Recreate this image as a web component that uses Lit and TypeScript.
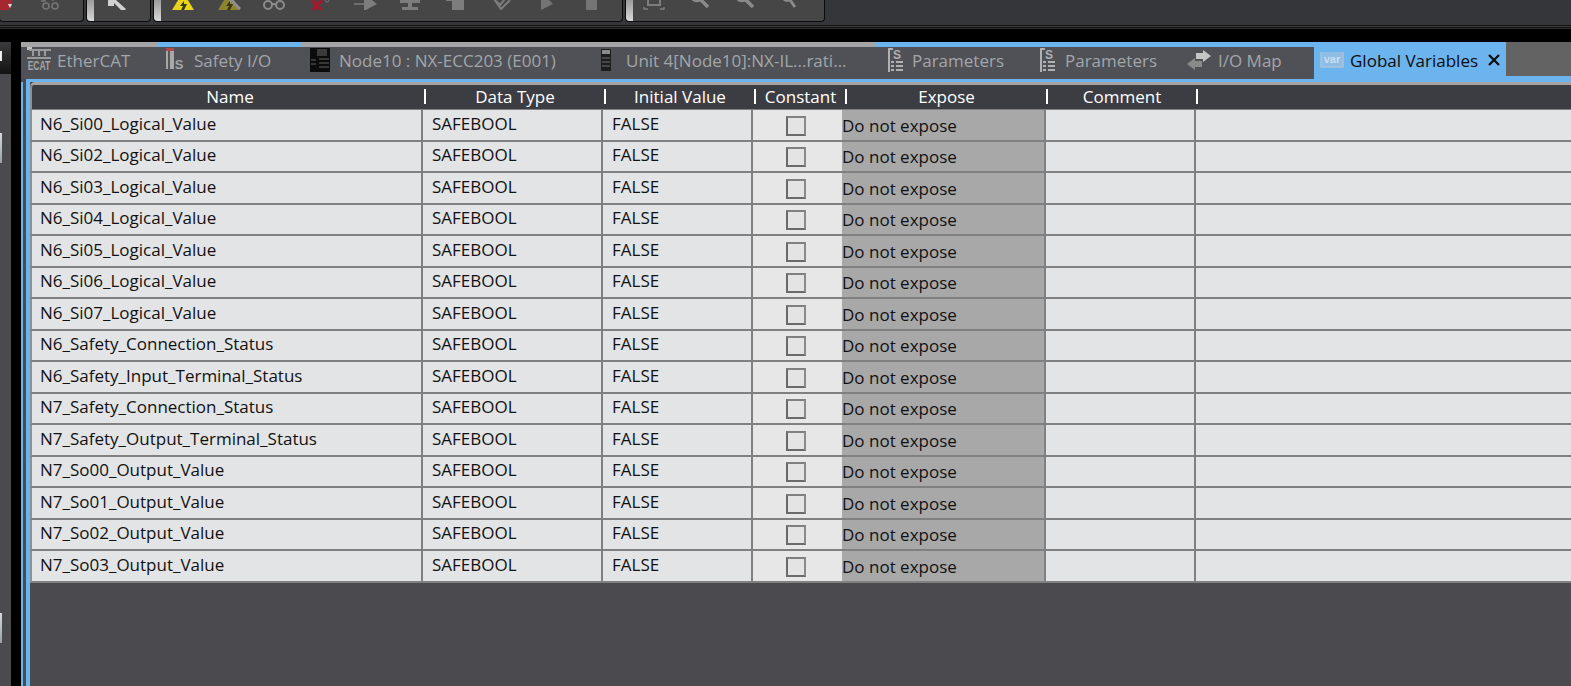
import { LitElement, html, css, svg } from 'lit'
import { customElement } from 'lit/decorators.js'

const names = [
  'N6_Si00_Logical_Value',
  'N6_Si02_Logical_Value',
  'N6_Si03_Logical_Value',
  'N6_Si04_Logical_Value',
  'N6_Si05_Logical_Value',
  'N6_Si06_Logical_Value',
  'N6_Si07_Logical_Value',
  'N6_Safety_Connection_Status',
  'N6_Safety_Input_Terminal_Status',
  'N7_Safety_Connection_Status',
  'N7_Safety_Output_Terminal_Status',
  'N7_So00_Output_Value',
  'N7_So01_Output_Value',
  'N7_So02_Output_Value',
  'N7_So03_Output_Value',
]

const headers = ['Name', 'Data Type', 'Initial Value', 'Constant', 'Expose', 'Comment']

// toolbar icons: only the lower part of each shows, the window cuts off the rest
const gray = '#7d7d7d'
const warn = (fill: string) => svg`<path d="M12 6 L23 24 H1 Z" fill=${fill} /><path d="M13 15 L9 20 H12 L10 24 H13 L16 18 H13 Z" fill="#3a3a10" />`
const glasses = svg`<circle cx="6" cy="19" r="4" fill="none" stroke="#8a8a8a" stroke-width="2"/><circle cx="18" cy="19" r="4" fill="none" stroke="#8a8a8a" stroke-width="2"/><path d="M10 18 H14" stroke="#8a8a8a" stroke-width="2"/>`
const icons = {
  warn: warn('#e8d41a'),
  warnDim: svg`${warn('#8c8430')}<path d="M10 10 L23 23" stroke="#8f8f8f" stroke-width="3"/>`,
  glasses,
  cross: svg`<path d="M4 14 L14 25 M14 14 L4 25" stroke="#a01a30" stroke-width="3.5"/><circle cx="19" cy="14" r="2" fill="none" stroke="#777" stroke-width="1"/>`,
  arrow: svg`<path d="M11 8 L24 18 L11 25 Z" fill=${gray}/><path d="M1 18 H11" stroke=${gray} stroke-width="1.5"/>`,
  tree: svg`<path d="M7 10 H17 V14 H22 V17 H14 V21 H20 V24 H4 V21 H10 V17 H2 V14 H7 Z" fill=${gray}/>`,
  block: svg`<path d="M2 12 H9 V15 H2 Z M8 8 H20 V24 H8 Z" fill=${gray}/>`,
  check: svg`<path d="M3 10 L12 23 L21 14" fill="none" stroke=${gray} stroke-width="2"/><path d="M7 15 L11 19 L20 8" fill="none" stroke=${gray} stroke-width="2"/>`,
  play: svg`<path d="M6 6 L18 18 L6 24 Z" fill="#747474"/>`,
  stop: svg`<path d="M6 6 H17 V24 H6 Z" fill="#747474"/>`,
  frame: svg`<path d="M6 8 H18 V19 H6 Z" fill="none" stroke=${gray} stroke-width="2"/><path d="M2 21 V23 H6 M22 21 V23 H18" fill="none" stroke=${gray} stroke-width="1.5"/>`,
  lens: svg`<circle cx="10" cy="9" r="6" fill="none" stroke="#8a8a8a" stroke-width="2.5"/><path d="M14 14 L21 21" stroke="#8a8a8a" stroke-width="3.5"/>`,
  lensSmall: svg`<circle cx="10" cy="11" r="4" fill="none" stroke="#8a8a8a" stroke-width="2"/><path d="M13 14 L18 21" stroke="#8a8a8a" stroke-width="3"/>`,
}

const ico = (body: unknown) => html`<svg class="tool" viewBox="0 0 24 24">${body}</svg>`

// tab icons
const tabIcons = {
  ecat: svg`<svg class="ti" width="24" height="28" viewBox="0 0 24 28"><rect x="0" y="0" width="5" height="4" fill="#c0c0c0"/><path d="M2 4 H24 M6 4 V10 M12 4 V10 M18 4 V10 M0 12 H24" stroke="#9a9a9a" stroke-width="2" fill="none"/><text transform="translate(12 24) scale(.66 1)" text-anchor="middle" font-family="Liberation Sans" font-size="13" font-weight="700" fill="#a5a5a5">ECAT</text></svg>`,
  safety: svg`<svg class="ti" width="20" height="27" viewBox="0 0 20 27"><rect x="1" y="1" width="8" height="21" fill="#a8a8a8"/><rect x="1" y="1" width="8" height="3" fill="#b04a4a"/><rect x="3" y="4" width="2" height="18" fill="#55565a"/><text x="14" y="22" text-anchor="middle" font-family="Liberation Sans" font-size="13" font-weight="700" fill="#a5a5a5">S</text></svg>`,
  node: svg`<svg class="ti" width="20" height="24" viewBox="0 0 20 24"><rect x="0" y="0" width="20" height="24" fill="#0c0c0c"/><rect x="7" y="1" width="10" height="7" fill="#3a3a3a"/><path d="M9 11 H19 M9 15 H19 M9 19 H19 M1 12 H6 M1 16 H6" stroke="#444" stroke-width="1.5"/></svg>`,
  unit: svg`<svg class="ti" width="10" height="22" viewBox="0 0 10 22"><rect width="10" height="22" fill="#1d1d1d"/><rect x="1" y="1" width="8" height="4" fill="#8a8a8a"/><path d="M1 9 H9 M1 13 H9 M1 17 H9" stroke="#555" stroke-width="1.5"/></svg>`,
  params: svg`<svg class="ti" width="16" height="26" viewBox="0 0 16 26"><path d="M1 1 H6 V3 H3 V25 H1 Z" fill="#b0b0b0"/><text x="10" y="12" text-anchor="middle" font-family="Liberation Sans" font-size="12" font-weight="700" fill="#b0b0b0">S</text><path d="M4 15 H7 M9 15 H16 M4 19 H7 M9 19 H16 M4 23 H7 M9 23 H16" stroke="#b0b0b0" stroke-width="2"/></svg>`,
  map: svg`<svg class="ti" width="24" height="20" viewBox="0 0 24 20"><path d="M9 3 H16 V0 L24 6 L16 12 V9 H9 Z" fill="#c5c5c5"/><path d="M15 11 H8 V8 L0 14 L8 20 V17 H15 Z" fill="#8a8a8a"/></svg>`,
  varbox: svg`<svg class="ti" width="24" height="18" viewBox="0 0 24 18"><path d="M1 1 V16 H23 V1" fill="#8fbde6" stroke="#a9c3dc" stroke-width="1.5"/><text x="12" y="12" text-anchor="middle" font-family="Liberation Sans" font-size="11" font-weight="700" fill="#cfdeec">var</text></svg>`,
}

const tabs = [
  { label: 'EtherCAT', icon: tabIcons.ecat, width: 137, pad: 6, gap: 6, lit: false },
  { label: 'Safety I/O', icon: tabIcons.safety, width: 144, pad: 7, gap: 9, lit: true },
  { label: 'Node10 : NX-ECC203 (E001)', icon: tabIcons.node, width: 288, pad: 8, gap: 9, lit: false },
  { label: 'Unit 4[Node10]:NX-IL...rati...', icon: tabIcons.unit, width: 286, pad: 11, gap: 15, lit: false },
  { label: 'Parameters', icon: tabIcons.params, width: 154, pad: 11, gap: 9, lit: true },
  { label: 'Parameters', icon: tabIcons.params, width: 148, pad: 9, gap: 10, lit: true },
  { label: 'I/O Map', icon: tabIcons.map, width: 136, pad: 9, gap: 7, lit: true },
]

@customElement('app-root')
class App extends LitElement {
  static styles = css`
    :host {
      display: block;
      width: 1571px;
      height: 686px;
      overflow: hidden;
      background: #000;
      font-family: 'Open Sans', 'Noto Sans', sans-serif;
      font-size: 17px;
    }
    .toolbar {
      display: flex;
      height: 25px;
      gap: 2px;
      background: #35363a;
      border-bottom: 1px solid #121212;
    }
    .group {
      display: flex;
      align-items: flex-end;
      height: 21px;
      box-sizing: content-box;
      padding-bottom: 11px;
      margin-top: -11px;
      background: #464646;
      border: 1px solid #0c0c0c;
      border-top: 0;
      border-radius: 0 0 4px 4px;
      overflow: hidden;
    }
    .grip {
      align-self: stretch;
      width: 7px;
      margin-bottom: -11px;
      background: linear-gradient(#7c7c7c, #d8d8d8);
      border-radius: 0 0 0 3px;
      flex: none;
    }
    .tool {
      flex: none;
      width: 24px;
      height: 24px;
    }
    .g1 { width: 83px; margin-left: -1px; gap: 14px; }
    .g2 { width: 63px; gap: 11px; }
    .g3 { width: 468px; gap: 21.4px; }
    .g4 { width: 198px; gap: 21px; }
    .g3 .grip { margin-right: -11px; }
    .g4 .grip { margin-right: -12px; }
    .band {
      height: 16px;
      background: linear-gradient(#3c3c3c 0, #3c3c3c 1px, #111 1px, #111 2px, #303030 2px, #303030 3px, #000 3px);
    }
    .body {
      display: flex;
      height: 644px;
    }
    .rail {
      flex: none;
      width: 11px;
      background: #4b4a4f;
    }
    .rail-top {
      height: 32px;
      padding-top: 9px;
      box-sizing: border-box;
      background: linear-gradient(#3a3a3c, #131313);
    }
    .rail-top i {
      display: block;
      width: 2px;
      height: 10px;
      background: #eee;
    }
    .pin {
      width: 2px;
      height: 30px;
      background: linear-gradient(#d6dadc, #9aa2a6);
    }
    .pin.one { margin-top: 59px; }
    .pin.two { margin-top: 450px; }
    .gutter {
      flex: none;
      width: 10px;
      background: #000;
    }
    .main {
      flex: 1;
      min-width: 0;
      display: flex;
      flex-direction: column;
      background: #4b4a4f;
    }
    .tabs {
      display: flex;
      height: 37px;
      flex: none;
    }
    .tab {
      display: flex;
      align-items: center;
      box-sizing: border-box;
      flex: none;
      height: 37px;
      padding-bottom: 6px;
      border-top: 5px solid #a5a5a5;
      background: #505156;
      color: #a2a6aa;
      white-space: nowrap;
      overflow: hidden;
    }
    .tab.lit {
      border-top-color: #6cb4ee;
    }
    .tab.active {
      width: 192px;
      padding-left: 6px;
      border-top-color: #6cb4ee;
      background: #6cb4ee;
      color: #0c0c0c;
    }
    .ti {
      flex: none;
    }
    .close {
      flex: none;
      margin-left: 4px;
    }
    .filler {
      flex: 1;
      background: #636363;
      border-bottom: 3px solid #6cb4ee;
      box-sizing: border-box;
      height: 37px;
    }
    .tabline {
      flex: none;
      height: 3px;
      margin-left: 5px;
      background: #6cb4ee;
    }
    .content {
      flex: 1;
      display: flex;
      min-height: 0;
    }
    .edge {
      flex: none;
      width: 2px;
      background: #6cb4ee;
    }
    .sheet {
      flex: 1;
      min-width: 0;
      margin-left: 3px;
      margin-top: -3px;
      border-left: 4px solid #6cb4ee;
    }
    .table {
      margin-top: 3px;
      border-top: 3px solid #a5a5a5;
      border-top-left-radius: 5px;
    }
    .head {
      display: grid;
      grid-template-columns: 394px 180px 150px 91px 201px 150px 1fr;
      height: 24px;
      background: #3c3d43;
      border-left: 2px solid #8f8f8f;
      border-bottom: 1px solid #808080;
      border-top-left-radius: 4px;
      color: #fff;
    }
    .hcell {
      display: flex;
      align-items: center;
      padding-bottom: 2px;
    }
    .hcell span {
      flex: 1;
      text-align: center;
    }
    .hcell:first-child span {
      padding-left: 4px;
    }
    .hcell i {
      flex: none;
      width: 2px;
      height: 15px;
      background: #fff;
    }
    .row {
      display: grid;
      grid-template-columns: 391px 180px 150px 89px 204px 150px 1fr;
      height: 31px;
      box-sizing: border-box;
      border-left: 2px solid #8f8f8f;
      border-bottom: 2px solid #808080;
      color: #111;
    }
    .row:nth-child(even) {
      height: 32px;
    }
    .cell {
      box-sizing: border-box;
      min-width: 0;
      padding-left: 9px;
      line-height: 27px;
      background: #e3e4e6;
      border-right: 2px solid #808080;
      white-space: nowrap;
    }
    /* the shorter rows sit their text one pixel higher */
    .row:nth-child(odd) .cell {
      line-height: 25px;
    }
    .cell.name { padding-left: 8px; }
    .cell.boxed {
      display: flex;
      align-items: center;
      justify-content: center;
      padding: 2px 3px 0 0;
      background: #e7e7e7;
      border-right: 0;
    }
    .row:nth-child(odd) .cell.boxed {
      padding-top: 0;
    }
    .check {
      width: 20px;
      height: 20px;
      box-sizing: border-box;
      background: #e4e4e4;
      border: 2px solid #717171;
      border-color: #808080 #8a8a8a #6a6a6a #6a6a6a;
    }
    .cell.expose {
      padding: 2px 0 0 0;
      background: #a8a8a8;
    }
    .cell.end { border-right: 0; }
  `

  render() {
    return html`
      <div class="toolbar">
        <div class="group g1">
          <svg class="tool" viewBox="0 0 24 24"><path d="M-4 8 H12 V20 L8 24 H-4 Z" fill="#a8272e"/><path d="M8 18 L12 18 L10 22 Z" fill="#ddd"/></svg>
          <svg class="tool" viewBox="0 0 24 24"><circle cx="8" cy="20" r="3" fill="none" stroke="#777" stroke-width="1.5"/><circle cx="17" cy="20" r="3" fill="none" stroke="#777" stroke-width="1.5"/><path d="M3 15 H7 V12 H15 V15" fill="none" stroke="#777" stroke-width="1.5"/></svg>
        </div>
        <div class="group g2">
          <div class="grip"></div>
          <svg class="tool" viewBox="0 0 24 24"><path d="M3 8 H10 V14 L11 14 L21 23 L18 26 L9 17 V20 H3 Z" fill="#d0d0d0"/></svg>
        </div>
        <div class="group g3">
          <div class="grip"></div>
          ${ico(icons.warn)}${ico(icons.warnDim)}${ico(icons.glasses)}${ico(icons.cross)}${ico(icons.arrow)}
          ${ico(icons.tree)}${ico(icons.block)}${ico(icons.check)}${ico(icons.play)}${ico(icons.stop)}
        </div>
        <div class="group g4">
          <div class="grip"></div>
          ${ico(icons.frame)}${ico(icons.lens)}${ico(icons.lens)}${ico(icons.lensSmall)}
        </div>
      </div>
      <div class="band"></div>
      <div class="body">
        <div class="rail">
          <div class="rail-top"><i></i></div>
          <div class="pin one"></div>
          <div class="pin two"></div>
        </div>
        <div class="gutter"></div>
        <div class="main">
          <div class="tabs">
            ${tabs.map(
              t => html`
                <div
                  class="tab ${t.lit ? 'lit' : ''}"
                  style="width:${t.width}px;padding-left:${t.pad}px;gap:${t.gap}px"
                >
                  ${t.icon}<span>${t.label}</span>
                </div>
              `
            )}
            <div class="tab active" style="gap:6px">
              ${tabIcons.varbox}<span>Global Variables</span>
              <svg class="close" width="12" height="12" viewBox="0 0 12 12"><path d="M1 1 L11 11 M11 1 L1 11" stroke="#0c0c0c" stroke-width="2.2"/></svg>
            </div>
            <div class="filler"></div>
          </div>
          <div class="tabline"></div>
          <div class="content">
            <div class="edge"></div>
            <div class="sheet">
              <div class="table">
                <div class="head">
                  ${headers.map(h => html`<div class="hcell"><span>${h}</span><i></i></div>`)}
                  <div class="hcell"></div>
                </div>
                ${names.map(
                  n => html`
                    <div class="row">
                      <div class="cell name">${n}</div>
                      <div class="cell">SAFEBOOL</div>
                      <div class="cell">FALSE</div>
                      <div class="cell boxed"><div class="check"></div></div>
                      <div class="cell expose">Do not expose</div>
                      <div class="cell"></div>
                      <div class="cell end"></div>
                    </div>
                  `
                )}
              </div>
            </div>
          </div>
        </div>
      </div>
    `
  }
}
export default App
